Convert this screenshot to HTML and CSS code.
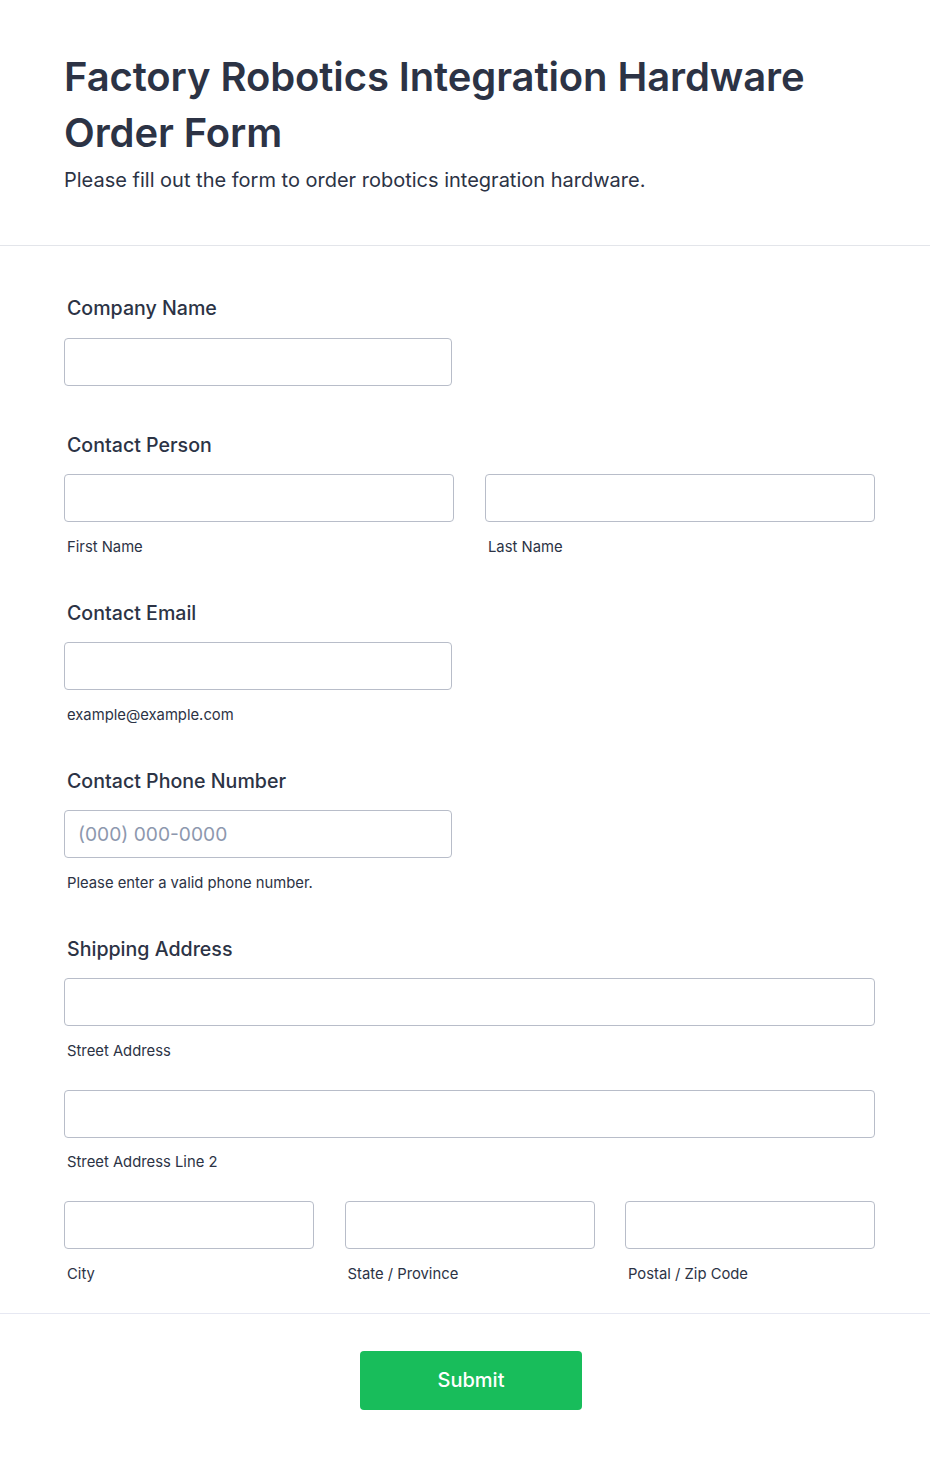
FILE: index.html
```html
<!DOCTYPE html>
<html lang="en">
<head>
<meta charset="utf-8">
<title>Factory Robotics Integration Hardware Order Form</title>
<link rel="stylesheet" href="styles.css">
</head>
<body>
<main class="form">
  <header class="form-header">
    <h1 class="form-title">Factory Robotics Integration Hardware Order Form</h1>
    <p class="form-desc">Please fill out the form to order robotics integration hardware.</p>
  </header>

  <section class="form-body">
    <div class="field field-first">
      <label class="label">Company Name</label>
      <input class="input input-half" type="text">
    </div>

    <div class="field">
      <label class="label">Contact Person</label>
      <div class="cols-2">
        <div class="col">
          <input class="input" type="text">
          <span class="sublabel">First Name</span>
        </div>
        <div class="col">
          <input class="input" type="text">
          <span class="sublabel">Last Name</span>
        </div>
      </div>
    </div>

    <div class="field">
      <label class="label">Contact Email</label>
      <input class="input input-half" type="email">
      <span class="sublabel">example@example.com</span>
    </div>

    <div class="field">
      <label class="label">Contact Phone Number</label>
      <input class="input input-half" type="tel" placeholder="(000) 000-0000">
      <span class="sublabel">Please enter a valid phone number.</span>
    </div>

    <div class="field field-last">
      <label class="label">Shipping Address</label>
      <div class="addr-row">
        <input class="input" type="text">
        <span class="sublabel">Street Address</span>
      </div>
      <div class="addr-row">
        <input class="input" type="text">
        <span class="sublabel">Street Address Line 2</span>
      </div>
      <div class="cols-3">
        <div class="col">
          <input class="input" type="text">
          <span class="sublabel">City</span>
        </div>
        <div class="col">
          <input class="input" type="text">
          <span class="sublabel">State / Province</span>
        </div>
        <div class="col">
          <input class="input" type="text">
          <span class="sublabel">Postal / Zip Code</span>
        </div>
      </div>
    </div>
  </section>

  <footer class="form-footer">
    <button class="submit" type="button">Submit</button>
  </footer>
</main>
</body>
</html>
```

FILE: styles.css
```css
* { box-sizing: border-box; }

html, body {
  margin: 0;
  padding: 0;
  background: #ffffff;
}

body {
  font-family: Inter, "Noto Sans", "Liberation Sans", sans-serif;
  color: #2c3345;
}

.form {
  width: 930px;
}

.form-header {
  padding: 49px 55px 50px 64px;
  border-bottom: 1px solid #e3e5ea;
}

.form-title {
  margin: 0;
  font-size: 40px;
  line-height: 56px;
  font-weight: 600;
  letter-spacing: -0.1px;
  color: #2c3345;
}

.form-desc {
  margin: 4px 0 0;
  font-size: 20px;
  line-height: 30px;
  font-weight: 400;
  color: #2c3345;
}

.form-body {
  padding: 47px 55px 29px 64px;
  border-bottom: 1px solid #e6e8f2;
}

.field {
  display: flex;
  flex-direction: column;
  margin-bottom: 41px;
}

.field-first {
  margin-bottom: 44px;
}

.field-last {
  margin-bottom: 0;
}

.label {
  display: block;
  padding-left: 3px;
  margin-bottom: 14.5px;
  font-size: 19.6px;
  line-height: 30px;
  font-weight: 500;
  color: #2c3345;
}

.input {
  display: block;
  width: 100%;
  height: 48px;
  padding: 0 13px;
  border: 1px solid #b8bdc9;
  border-radius: 4px;
  background: #ffffff;
  font-family: inherit;
  font-size: 19.2px;
  color: #2c3345;
  outline: none;
}

.input::placeholder {
  color: #8d98ae;
}

.input-half {
  width: 388px;
}

.sublabel {
  display: block;
  padding-left: 3px;
  margin-top: 14.5px;
  font-size: 14.8px;
  line-height: 20px;
  color: #2c3345;
}

.cols-2 {
  display: grid;
  grid-template-columns: 390px 390px;
  column-gap: 31px;
}

.cols-3 {
  display: grid;
  grid-template-columns: 250px 250px 250px;
  column-gap: 30.5px;
}

.col {
  display: flex;
  flex-direction: column;
}

.addr-row {
  margin-bottom: 29px;
}

.form-footer {
  display: flex;
  justify-content: center;
  padding: 37px 0 49px;
}

.submit {
  width: 222px;
  height: 59px;
  margin-left: 12px;
  border: none;
  border-radius: 4px;
  background: #18bd5b;
  color: #ffffff;
  font-family: inherit;
  font-size: 20px;
  font-weight: 500;
  cursor: pointer;
}
```
